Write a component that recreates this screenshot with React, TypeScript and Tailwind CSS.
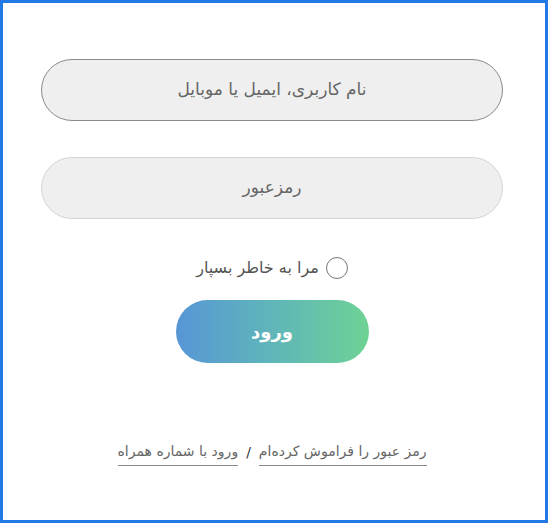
import React from 'react';

export default function App() {
  return (
    <div
      dir="rtl"
      className="w-[548px] h-[523px] border-[3px] border-[#2279e6] bg-white pr-[4px] flex flex-col items-center"
      style={{ fontFamily: '"DejaVu Sans", sans-serif' }}
    >
      <div className="mt-[56px] w-[462px] h-[62px] rounded-full border border-[#8a8a8a] bg-[#efefef] flex items-center justify-center text-[17px] text-[#666]">
        نام کاربری، ایمیل یا موبایل
      </div>
      <div className="mt-[36px] w-[462px] h-[62px] rounded-full border border-[#d4d4d4] bg-[#efefef] flex items-center justify-center text-[17px] text-[#666]">
        رمزعبور
      </div>

      <label className="mt-[37px] flex items-center gap-[7px] text-[16px] text-[#555]">
        <span className="w-[22px] h-[22px] rounded-full border border-[#777] bg-white"></span>
        <span>مرا به خاطر بسپار</span>
      </label>

      <button className="mt-[20px] w-[193px] h-[63px] rounded-full bg-gradient-to-r from-[#5796d6] to-[#6ed293] text-white text-[18px] font-bold">
        ورود
      </button>

      <div className="mt-[78px] flex items-center gap-[8px] text-[14px] text-[#666]">
        <span className="border-b border-[#888] pb-[3px]">رمز عبور را فراموش کرده‌ام</span>
        <span className="text-[#333] pb-[3px]">/</span>
        <span className="border-b border-[#888] pb-[3px]">ورود با شماره همراه</span>
      </div>
    </div>
  );
}
